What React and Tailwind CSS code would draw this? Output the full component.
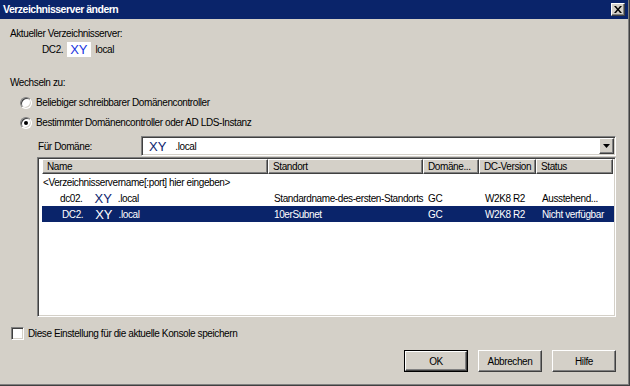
import React from 'react'

const sunken =
  'border border-t-[#808080] border-l-[#808080] border-r-white border-b-white shadow-[inset_1px_1px_0_#404040,inset_-1px_-1px_0_#d4d0c8]'
const raised =
  'border border-t-white border-l-white border-r-[#404040] border-b-[#404040] shadow-[inset_-1px_-1px_0_#808080]'

const columns = [
  { name: 'Name', w: 'w-[226px]' },
  { name: 'Standort', w: 'w-[155px]' },
  { name: 'Domäne...', w: 'w-[56px]' },
  { name: 'DC-Version', w: 'w-[57px]' },
  { name: 'Status', w: 'w-[77px]' },
]

const rows = [
  { prefix: 'dc02.', indent: 'pl-[18px]', site: 'Standardname-des-ersten-Standorts', dom: 'GC', ver: 'W2K8 R2', status: 'Ausstehend...' },
  { prefix: 'DC2.', indent: 'pl-[20px]', site: '10erSubnet', dom: 'GC', ver: 'W2K8 R2', status: 'Nicht verfügbar', selected: true },
]

const Radio = ({ checked, label }) => (
  <div className="flex items-center h-[13px]">
    <span className="w-[12px] h-[12px] rounded-full bg-white border border-t-[#808080] border-l-[#808080] border-r-white border-b-white shadow-[inset_1px_1px_0_#404040,inset_-1px_-1px_0_#d4d0c8] flex items-center justify-center">
      {checked && <span className="w-[4px] h-[4px] rounded-full bg-black" />}
    </span>
    <span className="ml-[4px]">{label}</span>
  </div>
)

const Button = ({ children, isDefault }) => (
  <div className={isDefault ? 'border border-black' : 'p-0'}>
    <div className={`${raised} bg-[#d4d0c8] flex items-center justify-center ${isDefault ? 'w-[62px] h-[20px]' : 'w-[64px] h-[22px]'}`}>
      {children}
    </div>
  </div>
)

export default function App() {
  return (
    <div className="w-[630px] h-[386px] bg-[#d4d0c8] border-r border-b border-[#404040] font-['Liberation_Sans',Arial,sans-serif] text-[10px] tracking-[-0.4px] leading-[13px] text-black">
      <div className="w-full h-full flex flex-col border-r border-b border-[#808080]">
        {/* title bar */}
        <div className="h-[19px] bg-[#0a246a] flex items-center justify-between pl-[3px] pr-[3px]">
          <span className="text-white font-bold text-[10.5px] tracking-[-0.5px]">Verzeichnisserver ändern</span>
          <div className={`${raised} bg-[#d4d0c8] w-[14px] h-[13px] flex items-center justify-center`}>
            <svg width="8" height="7" viewBox="0 0 8 7">
              <path d="M0 0h2l2 2.5L6 0h2L5 3.5 8 7H6L4 4.5 2 7H0l3-3.5z" fill="#000" />
            </svg>
          </div>
        </div>

        <div className="flex-1 flex flex-col pl-[10px] pr-[12px]">
          <div className="mt-[8px]">Aktueller Verzeichnisserver:</div>
          <div className="mt-[2px] ml-[32px] flex items-center h-[15px]">
            <span>DC2.</span>
            <span className="ml-[4px] bg-white px-[3px] h-[15px] flex items-center text-[13px] tracking-normal text-[#1a35e0]">XY</span>
            <span className="ml-[5px]">local</span>
          </div>

          <div className="mt-[19px]">Wechseln zu:</div>
          <div className="mt-[7px] ml-[10px] flex flex-col gap-[7px]">
            <Radio label="Beliebiger schreibbarer Domänencontroller" />
            <Radio checked label="Bestimmter Domänencontroller oder AD LDS-Instanz" />
          </div>

          <div className="mt-[7px] ml-[28px] flex items-center">
            <span className="w-[103px]">Für Domäne:</span>
            <div className={`${sunken} bg-white flex-1 h-[20px] flex items-center`}>
              <span className="ml-[7px] text-[13px] tracking-normal text-[#0d1e6e]">XY</span>
              <span className="ml-[9px]">.local</span>
              <div className={`${raised} ml-auto mr-[1px] w-[15px] h-[16px] bg-[#d4d0c8] flex items-center justify-center`}>
                <svg width="7" height="4" viewBox="0 0 7 4"><path d="M0 0h7L3.5 4z" fill="#000" /></svg>
              </div>
            </div>
          </div>

          {/* list */}
          <div className={`${sunken} mt-[1px] ml-[27px] h-[160px] bg-white pl-[4px] pr-[1px] pt-[1px]`}>
            <div className="flex h-[15px]">
              {columns.map((c) => (
                <div key={c.name} className={`${c.w} ${raised} bg-[#d4d0c8] pl-[4px] flex items-center whitespace-nowrap overflow-hidden`}>
                  {c.name}
                </div>
              ))}
            </div>
            <div className="h-[16px] flex items-center pl-[1px]">&lt;Verzeichnisservername[:port] hier eingeben&gt;</div>
            {rows.map((r) => (
              <div
                key={r.prefix}
                className={`flex h-[16px] items-center whitespace-nowrap ${r.selected ? 'bg-[#0a246a] text-white' : ''}`}
              >
                <div className={`w-[226px] flex items-center ${r.indent}`}>
                  <span>{r.prefix}</span>
                  <span className={`ml-[12px] text-[13px] tracking-normal ${r.selected ? 'text-white' : 'text-[#0d1e6e]'}`}>XY</span>
                  <span className="ml-[6px]">.local</span>
                </div>
                <div className="w-[155px] pl-[6px]">{r.site}</div>
                <div className="w-[56px] pl-[5px]">{r.dom}</div>
                <div className="w-[57px] pl-[6px]">{r.ver}</div>
                <div className="w-[77px] pl-[6px]">{r.status}</div>
              </div>
            ))}
          </div>

          <div className="mt-[10px] ml-[1px] flex items-center">
            <span className={`${sunken} bg-white w-[13px] h-[13px]`} />
            <span className="ml-[4px]">Diese Einstellung für die aktuelle Konsole speichern</span>
          </div>

          <div className="mt-[10px] flex justify-end gap-[10px]">
            <Button isDefault>OK</Button>
            <Button>Abbrechen</Button>
            <Button>Hilfe</Button>
          </div>
        </div>
      </div>
    </div>
  )
}
